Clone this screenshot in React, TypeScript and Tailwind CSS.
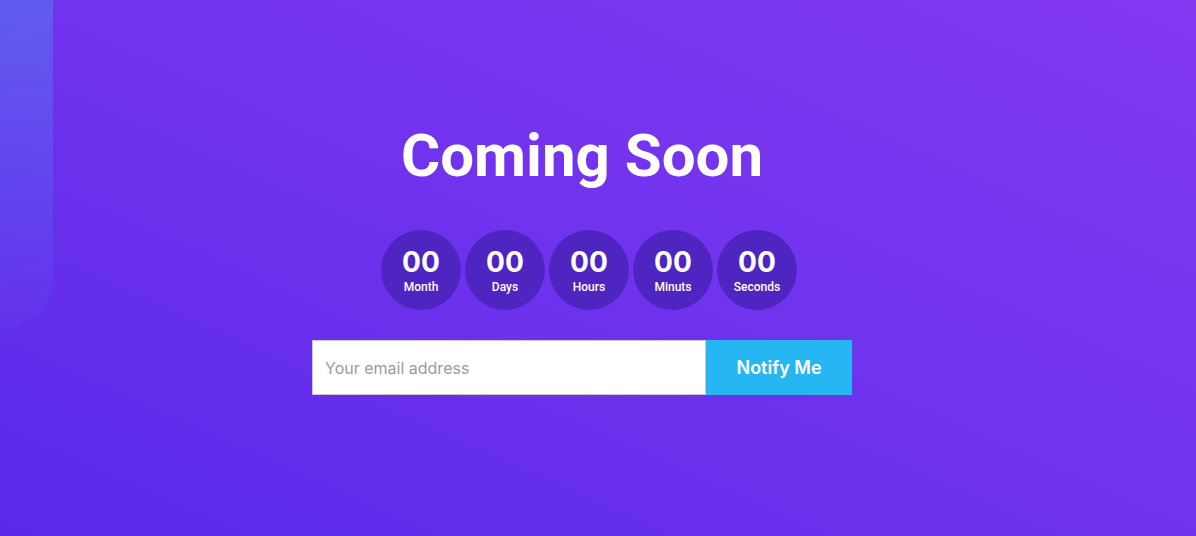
import React from 'react'

const units = ['Month', 'Days', 'Hours', 'Minuts', 'Seconds']

const App = () => {
  return (
    <div className="relative w-full h-[536px] overflow-hidden bg-gradient-to-tr from-[#5a29ea] to-[#8439f1]">
      <div className="absolute left-0 top-0 w-[53px] h-[330px] rounded-br-[64px] bg-gradient-to-b from-[rgba(80,140,240,0.45)] to-[rgba(80,120,240,0.06)]" />
      <div className="flex flex-col items-center pt-[121px] pr-[32px]">
        <h1 className="text-white font-bold text-[60px] leading-[70px]" style={{ fontFamily: 'Roboto, "Liberation Sans", sans-serif' }}>
          Coming Soon
        </h1>
        <div className="flex gap-[4px] mt-[39px] ml-[14px]">
          {units.map((u) => (
            <div key={u} className="w-[80px] h-[80px] rounded-full bg-[#4f25c2] flex flex-col items-center justify-center text-white">
              <span className="text-[28px] leading-[30px] font-bold" style={{ fontFamily: 'Inter, Roboto, sans-serif' }}>00</span>
              <span className="text-[12px] leading-[14px] font-medium mt-[3px]" style={{ fontFamily: 'Roboto, "Liberation Sans", sans-serif' }}>{u}</span>
            </div>
          ))}
        </div>
        <form className="flex mt-[30px] w-[540px] h-[55px]" style={{ fontFamily: 'Inter, "Open Sans", sans-serif' }}>
          <input
            type="email"
            placeholder="Your email address"
            className="flex-1 h-full bg-white border border-[#c9c9d6] px-[12px] text-[16px] text-gray-700 placeholder:text-[#9b9b9b] outline-none"
          />
          <button type="button" className="w-[146px] h-full bg-[#27b6f4] text-white text-[18px] font-semibold">
            Notify Me
          </button>
        </form>
      </div>
    </div>
  )
}

export default App
